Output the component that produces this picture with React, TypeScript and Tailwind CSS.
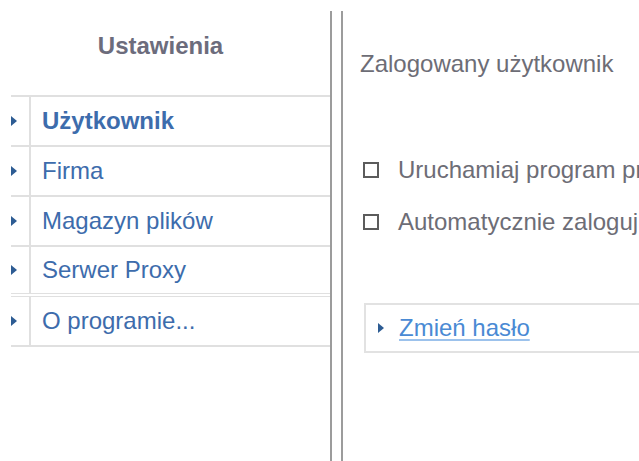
import React, { useState } from 'react';

type NavItem = { id: string; label: string };

const navItems: NavItem[] = [
  { id: 'user', label: 'Użytkownik' },
  { id: 'company', label: 'Firma' },
  { id: 'storage', label: 'Magazyn plików' },
  { id: 'proxy', label: 'Serwer Proxy' },
  { id: 'about', label: 'O programie...' },
];

// small filled triangle used as the row / link marker
const Arrow: React.FC = () => (
  <svg width="6" height="10" viewBox="0 0 6 10" className="shrink-0">
    <path d="M0 0 L6 5 L0 10 Z" fill="#2d5c93" />
  </svg>
);

const Checkbox: React.FC<{ label: string; checked: boolean; onToggle: () => void }> = ({ label, checked, onToggle }) => (
  <label className="flex items-center gap-[19px] cursor-pointer" onClick={onToggle}>
    <span className="w-[16px] h-[16px] shrink-0 border-2 border-[#5c5c5c] bg-white flex items-center justify-center text-[12px] leading-none text-[#333]">
      {checked ? '✓' : ''}
    </span>
    <span className="text-[24px] leading-[28px] text-[#6d6d76]">{label}</span>
  </label>
);

export default function App() {
  const [active, setActive] = useState('user');
  const [autostart, setAutostart] = useState(false);
  const [autologin, setAutologin] = useState(false);

  return (
    <div className="w-[639px] h-[461px] overflow-hidden bg-white flex font-['Liberation_Sans',Arial,sans-serif]">
      {/* Sidebar */}
      <div className="w-[330px] shrink-0 pl-[11px] flex flex-col">
        <div className="h-[95px] pt-[32px] pr-[20px] text-center">
          <h2 className="text-[24px] leading-[28px] font-bold text-[#6c6c7c]">Ustawienia</h2>
        </div>
        <ul className="border-t-2 border-[#e0e0e0]">
          {navItems.map((item, i) => (
            <li
              key={item.id}
              onClick={() => setActive(item.id)}
              className={`flex h-[50px] cursor-pointer ${i === 3 ? 'border-b-4 border-double' : 'border-b-2'} border-[#e0e0e0]`}
            >
              <div className="w-[18px] flex items-center">
                <Arrow />
              </div>
              <div className="flex-1 border-l-2 border-[#e0e0e0] pl-[11px] flex items-center">
                <span
                  className={`text-[24px] leading-[28px] text-[#3d6cac] ${active === item.id ? 'font-bold' : ''}`}
                >
                  {item.label}
                </span>
              </div>
            </li>
          ))}
        </ul>
      </div>

      {/* Double divider */}
      <div className="w-[13px] shrink-0 mt-[11px] border-l-2 border-r-2 border-[#9c9c9c]" />

      {/* Right panel */}
      <div className="flex-1 min-w-0 overflow-hidden whitespace-nowrap pl-[17px] pt-[50px]">
        <p className="text-[24px] leading-[28px] text-[#6d6d76]">Zalogowany użytkownik</p>

        <div className="mt-[78px] pl-[3px] flex flex-col gap-[24px]">
          <Checkbox
            label="Uruchamiaj program przy starcie systemu"
            checked={autostart}
            onToggle={() => setAutostart(!autostart)}
          />
          <Checkbox
            label="Automatycznie zaloguj"
            checked={autologin}
            onToggle={() => setAutologin(!autologin)}
          />
        </div>

        <div className="mt-[67px] ml-[4px] w-[320px] h-[50px] border-2 border-[#e2e2e2] flex items-center pl-[12px] gap-[15px]">
          <Arrow />
          <a
            href="#"
            className="text-[24px] leading-[28px] text-[#4a8ad4] underline decoration-[#9cc2ec] underline-offset-[3px]"
          >
            Zmień hasło
          </a>
        </div>
      </div>
    </div>
  );
}
